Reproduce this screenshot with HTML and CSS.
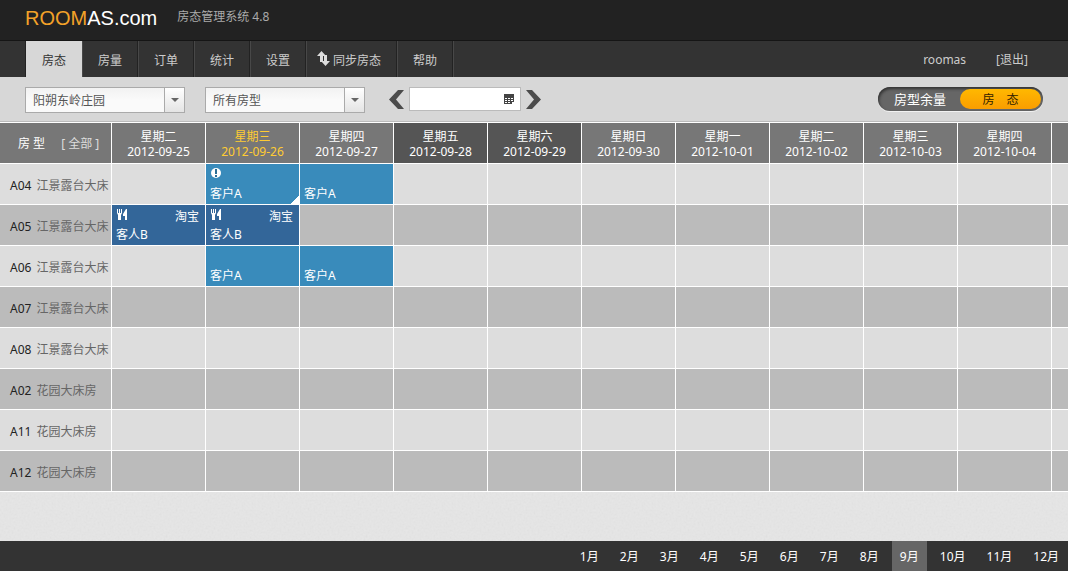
FILE: index.html
```html
<!DOCTYPE html>
<html lang="zh-CN">
<head>
<meta charset="utf-8">
<title>ROOMAS.com 房态管理系统</title>
<link rel="stylesheet" href="styles.css">
</head>
<body>
<svg class="defs" aria-hidden="true">
  <symbol id="fork" viewBox="0 0 10 11"><path fill="#fff" d="M0 0h1v4h1V0h1v4h1V0h1v4L4 6v5H1V6L0 4zM9 0h1v11H8V7H6V5z"/></symbol>
  <symbol id="alert" viewBox="0 0 10 10"><circle cx="5" cy="5" r="5" fill="#fff"/><path fill="#2b6f96" d="M4 1h2v5H4zM4 7h2v2H4z"/></symbol>
</svg>
<header class="brand">
  <h1 class="logo"><span class="logo-accent">ROOM</span>AS.com</h1>
  <p class="tagline">房态管理系统 4.8</p>
</header>
<nav class="nav">
  <div class="tabs">
    <a class="tab active" href="#">房态</a>
    <a class="tab" href="#">房量</a>
    <a class="tab" href="#">订单</a>
    <a class="tab" href="#">统计</a>
    <a class="tab" href="#">设置</a>
    <a class="tab sync" href="#"><svg width="13" height="16" viewBox="0 0 13 16" aria-hidden="true"><path fill="#ddd" d="M4.500 0L9 5H6v6H3V5H0zM7 4h3v6h3l-4.500 5L4 10h3z"/></svg>同步房态</a>
    <a class="tab" href="#">帮助</a>
  </div>
  <div class="account"><span>roomas</span><a href="#">[退出]</a></div>
</nav>
<section class="toolbar">
  <div class="select"><select aria-label="庄园"><option>阳朔东岭庄园</option></select></div>
  <div class="select"><select aria-label="房型"><option>所有房型</option></select></div>
  <div class="dates">
    <button type="button" class="step" aria-label="往前"><svg width="15" height="19" viewBox="0 0 15 19"><path fill="#4c4c4c" d="M9 0h6L7 9.500 15 19H9L0 9.500z"/></svg></button>
    <div class="date">
      <input type="text" aria-label="日期">
      <svg width="10" height="10" viewBox="0 0 10 10" aria-hidden="true"><path fill="#444" d="M0 0h10v8H8v2H0z"/><path fill="#fff" d="M1 4h2v1H1zM4 4h2v1H4zM7 4h2v1H7zM1 6h2v1H1zM4 6h2v1H4zM7 6h2v1H7zM1 8h2v1H1zM4 8h2v1H4z"/></svg>
    </div>
    <button type="button" class="step" aria-label="往后"><svg width="15" height="19" viewBox="0 0 15 19"><path fill="#4c4c4c" d="M6 0H0l8 9.500L0 19h6l9-9.500z"/></svg></button>
  </div>
  <div class="toggle">
    <button type="button" class="toggle-off">房型余量</button>
    <button type="button" class="toggle-on">房　态</button>
  </div>
</section>
<main class="board">
  <table class="grid">
    <colgroup><col class="col-room"><col span="11"></colgroup>
    <thead>
      <tr>
        <th><span class="corner"><span>房 型</span><a href="#">[ 全部 ]</a></span></th>
        <th>星期二<br>2012-09-25</th>
        <th class="today">星期三<br>2012-09-26</th>
        <th>星期四<br>2012-09-27</th>
        <th class="weekend">星期五<br>2012-09-28</th>
        <th class="weekend">星期六<br>2012-09-29</th>
        <th>星期日<br>2012-09-30</th>
        <th>星期一<br>2012-10-01</th>
        <th>星期二<br>2012-10-02</th>
        <th>星期三<br>2012-10-03</th>
        <th>星期四<br>2012-10-04</th>
        <th></th>
      </tr>
    </thead>
    <tbody>
      <tr><th>A04<span class="type">江景露台大床</span></th><td></td>
        <td><div class="stay corner-mark"><div class="stay-top"><svg width="10" height="10"><use href="#alert"/></svg></div><div>客户A</div></div></td>
        <td><div class="stay"><div class="stay-top"></div><div>客户A</div></div></td>
        <td></td><td></td><td></td><td></td><td></td><td></td><td></td><td></td></tr>
      <tr><th>A05<span class="type">江景露台大床</span></th>
        <td><div class="stay in"><div class="stay-top"><svg width="10" height="11"><use href="#fork"/></svg><span>淘宝</span></div><div>客人B</div></div></td>
        <td><div class="stay in"><div class="stay-top"><svg width="10" height="11"><use href="#fork"/></svg><span>淘宝</span></div><div>客人B</div></div></td>
        <td></td><td></td><td></td><td></td><td></td><td></td><td></td><td></td><td></td></tr>
      <tr><th>A06<span class="type">江景露台大床</span></th><td></td>
        <td><div class="stay"><div class="stay-top"></div><div>客户A</div></div></td>
        <td><div class="stay"><div class="stay-top"></div><div>客户A</div></div></td>
        <td></td><td></td><td></td><td></td><td></td><td></td><td></td><td></td></tr>
      <tr><th>A07<span class="type">江景露台大床</span></th><td></td><td></td><td></td><td></td><td></td><td></td><td></td><td></td><td></td><td></td><td></td></tr>
      <tr><th>A08<span class="type">江景露台大床</span></th><td></td><td></td><td></td><td></td><td></td><td></td><td></td><td></td><td></td><td></td><td></td></tr>
      <tr><th>A02<span class="type">花园大床房</span></th><td></td><td></td><td></td><td></td><td></td><td></td><td></td><td></td><td></td><td></td><td></td></tr>
      <tr><th>A11<span class="type">花园大床房</span></th><td></td><td></td><td></td><td></td><td></td><td></td><td></td><td></td><td></td><td></td><td></td></tr>
      <tr><th>A12<span class="type">花园大床房</span></th><td></td><td></td><td></td><td></td><td></td><td></td><td></td><td></td><td></td><td></td><td></td></tr>
    </tbody>
  </table>
</main>
<footer class="months">
  <a href="#">1月</a><a href="#">2月</a><a href="#">3月</a><a href="#">4月</a><a href="#">5月</a><a href="#">6月</a><a href="#">7月</a><a href="#">8月</a><a class="current" href="#">9月</a><a href="#">10月</a><a href="#">11月</a><a href="#">12月</a>
</footer>
</body>
</html>
```
FILE: styles.css
```css
* { box-sizing: border-box; }

body {
  margin: 0;
  min-height: 100vh;
  display: flex;
  flex-direction: column;
  font: 12px/16px "Noto Sans", "Noto Sans CJK SC", sans-serif;
  color: #222;
  background: #e6e6e6 url("data:image/svg+xml,%3Csvg xmlns='http://www.w3.org/2000/svg' width='200' height='200'%3E%3Cfilter id='n'%3E%3CfeTurbulence type='fractalNoise' baseFrequency='.5' numOctaves='2' stitchTiles='stitch'/%3E%3CfeColorMatrix type='saturate' values='0'/%3E%3C/filter%3E%3Crect width='200' height='200' filter='url(%23n)' opacity='.1'/%3E%3C/svg%3E");
}

a { color: inherit; text-decoration: none; }

button, input, select { font: inherit; color: inherit; margin: 0; }

button { border: 0; padding: 0; background: none; cursor: pointer; }

svg { display: block; flex: none; }

.defs { position: absolute; width: 0; height: 0; }

.brand {
  display: flex;
  gap: 20px;
  height: 41px;
  padding: 6px 25px;
  background: #222;
  border-bottom: 1px solid #151515;
}

.logo {
  margin: 0;
  font: 20px/24px "Liberation Sans", sans-serif;
  color: #fff;
}

.logo-accent { color: #f3a229; }

.tagline { margin: 3px 0 0; color: #aaa; }

.nav {
  display: flex;
  justify-content: space-between;
  height: 36px;
  padding: 0 40px 0 25px;
  background: #333;
  color: #ccc;
  line-height: 36px;
}

.tabs { display: flex; border-left: 1px solid #222; }

.tab {
  display: flex;
  align-items: center;
  gap: 3px;
  padding: 3px 15px 0;
  border-left: 1px solid #484848;
  border-right: 1px solid #222;
}

.tab.active { background: #d7d7d7; color: #333; border-color: #d7d7d7; }

.tab.sync { padding-left: 10px; }

.tab.sync svg { margin-bottom: 3px; }

.tab:last-child { box-shadow: 1px 0 #484848; }

.account { display: flex; gap: 30px; padding-top: 1px; }

.toolbar {
  display: flex;
  align-items: flex-start;
  gap: 20px;
  height: 46px;
  padding: 10px 25px 0;
  background: #d7d7d7;
  border-bottom: 1px solid #fff;
  box-shadow: inset 0 -1px #bbb;
}

.select { position: relative; width: 160px; }

.select select {
  display: block;
  width: 100%;
  height: 26px;
  padding: 1px 24px 0 7px;
  border: 1px solid #aaa;
  border-radius: 0;
  appearance: none;
  color: #555;
  background: linear-gradient(#f2f2f2, #fafafa 50%);
}

.select::before {
  content: "";
  position: absolute;
  inset: 1px 1px 1px auto;
  width: 19px;
  border-left: 1px solid #aaa;
  background: linear-gradient(#fff, #e4e4e4);
  pointer-events: none;
}

.select::after {
  content: "";
  position: absolute;
  top: 11px;
  right: 6px;
  border: 4px solid transparent;
  border-top-color: #666;
  border-bottom: 0;
  pointer-events: none;
}

.dates { display: flex; align-items: center; gap: 5px; margin-left: 4px; }

.date { position: relative; }

.date input {
  display: block;
  width: 112px;
  height: 24px;
  padding: 0 24px 0 6px;
  border: 1px solid #bbb;
  background: #fff;
}

.date svg { position: absolute; top: 7px; right: 7px; }

.toggle {
  display: flex;
  align-items: center;
  justify-content: flex-end;
  width: 165px;
  height: 24px;
  margin-left: auto;
  padding: 0 2px 0 16px;
  border-radius: 12px;
  background: #666;
  box-shadow: inset 1px 2px 3px #333, 0 1px #f2f2f2;
}

.toggle-off { flex: 1; text-align: left; font-size: 13px; color: #fff; }

.toggle-on {
  width: 81px;
  height: 20px;
  padding-top: 1px;
  border-radius: 10px;
  background: linear-gradient(#ffb800, #fa9d00);
  color: #332200;
}

.board { flex: 1; overflow: hidden; }

.grid {
  width: 1146px;
  table-layout: fixed;
  border-collapse: separate;
  border-spacing: 0;
}

.col-room { width: 112px; }

.grid th, .grid td {
  height: 41px;
  padding: 0;
  border: solid #fff;
  border-width: 0 1px 1px 0;
  font-weight: normal;
}

.grid thead th {
  padding-top: 1px;
  background: #777;
  color: #fff;
  line-height: 15px;
}

.grid thead .today { color: #fc3; }

.grid thead .weekend { background: #555; }

.corner { display: flex; gap: 16px; padding-left: 18px; white-space: nowrap; }

.corner a { color: #ddd; }

.grid tbody th { padding: 3px 0 0 10px; text-align: left; white-space: nowrap; }

.grid tbody tr { background: #ddd; }

.grid tbody tr:nth-child(even) { background: #bbb; }

.type { margin-left: 5px; color: #666; }

.stay {
  display: grid;
  grid-template-rows: 16px 16px;
  gap: 2px;
  padding: 4px 6px 2px 4px;
  background: #398bbb;
  color: #fff;
}

.stay.in { background: #369; }

.stay-top { display: flex; justify-content: space-between; align-items: flex-start; }

.stay-top svg { margin-left: 1px; }

.corner-mark {
  background: linear-gradient(135deg, #398bbb 50%, #fff 50%) right bottom / 8px 8px no-repeat, #398bbb;
}

.months {
  display: flex;
  justify-content: flex-end;
  gap: 5px;
  padding: 1px 1px 0 0;
  background: #333;
  color: #fff;
  line-height: 29px;
}

.months a { min-width: 35px; padding: 1px 8px 0; margin-top: -1px; }

.months .current { background: #666; }
```
